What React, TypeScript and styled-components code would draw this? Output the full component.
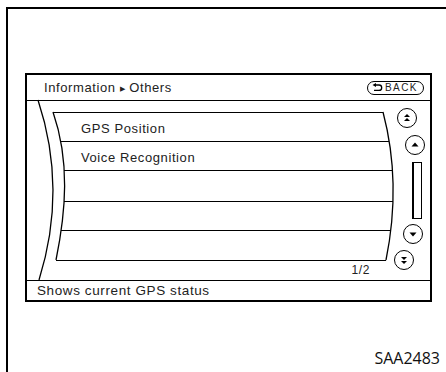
import styled, { createGlobalStyle } from 'styled-components';

const GlobalStyle = createGlobalStyle`
  html, body {
    margin: 0;
    padding: 0;
    background: #fff;
  }
  * {
    box-sizing: border-box;
  }
`;

// curve control points (x only, relative to the list body); y is spread evenly
const LEFT_EDGE = [26, 43, 39, 29];
const RIGHT_EDGE = [356, 369, 369, 359];
const EDGE_TOP = 11;
const EDGE_BOTTOM = 159;

const bez = (p: number[], y: number) => {
  const t = (y - EDGE_TOP) / (EDGE_BOTTOM - EDGE_TOP);
  const u = 1 - t;
  return u * u * u * p[0] + 3 * t * u * u * p[1] + 3 * t * t * u * p[2] + t * t * t * p[3];
};

const TEXT_LEFT = 54;

const rows = [
  { label: 'GPS Position', line: 40 },
  { label: 'Voice Recognition', line: 69 },
  { label: '', line: 100 },
  { label: '', line: 129 },
  { label: '', line: 159 },
];

const Page = styled.div`
  width: 446px;
  height: 372px;
  padding: 7px 0 0 6px;
  overflow: hidden;
`;

const Frame = styled.div`
  height: 365px;
  border-top: 2px solid #000;
  border-left: 2px solid #000;
  display: flex;
  flex-direction: column;
`;

const Screen = styled.div`
  margin: 64px 0 0 17px;
  width: 407px;
  height: 229px;
  border: 2px solid #000;
  display: flex;
  flex-direction: column;
  font-family: 'Liberation Sans', Arial, sans-serif;
  color: #222;
  letter-spacing: 0.6px;
`;

const Header = styled.div`
  height: 26px;
  border-bottom: 1px solid #000;
  display: flex;
  align-items: center;
  justify-content: space-between;
  padding: 0 6px 0 17px;
`;

const Title = styled.div`
  font-size: 13px;
`;

const Sep = styled.span`
  font-size: 7px;
  margin: 0 4px;
  position: relative;
  top: -1px;
`;

const BackButton = styled.div`
  width: 57px;
  height: 14px;
  border: 1.3px solid #000;
  border-radius: 7px;
  display: flex;
  align-items: center;
  padding-left: 4px;
  gap: 2px;
  font-size: 10px;
  letter-spacing: 1.4px;
`;

const Body = styled.div`
  position: relative;
  height: 179px;
  display: flex;
`;

const Curves = styled.svg`
  position: absolute;
  left: 0;
  top: 0;
  overflow: visible;
  pointer-events: none;
`;

const ListColumn = styled.div`
  width: 366px;
  padding-top: 11px;
  display: flex;
  flex-direction: column;
`;

const TopRule = styled.div<{ $left: number; $width: number }>`
  margin-left: ${(p) => p.$left}px;
  width: ${(p) => p.$width}px;
  height: 1px;
  background: #000;
`;

const Row = styled.div<{ $left: number; $width: number; $height: number }>`
  margin-left: ${(p) => p.$left}px;
  width: ${(p) => p.$width}px;
  height: ${(p) => p.$height + 1}px;
  padding: 3px 0 0 ${(p) => TEXT_LEFT - p.$left}px;
  border-bottom: 1px solid #000;
  display: flex;
  align-items: center;
  font-size: 13px;
  white-space: nowrap;
`;

const PageCount = styled.div`
  text-align: right;
  padding: 2px 23px 0 0;
  font-size: 12px;
  line-height: 14px;
`;

const ScrollColumn = styled.div`
  width: 37px;
  display: flex;
  flex-direction: column;
  align-items: flex-start;
`;

const Knob = styled.div<{ $shift: number; $gap: number }>`
  margin: ${(p) => p.$gap}px 0 0 ${(p) => p.$shift}px;
  width: 20px;
  height: 20px;
  border: 1.3px solid #000;
  border-radius: 50%;
  display: flex;
  align-items: center;
  justify-content: center;
`;

const Track = styled.div`
  margin: 7px 0 0 19px;
  width: 10px;
  height: 57px;
  border: 1.5px solid #000;
  border-left-width: 2px;
`;

const StatusBar = styled.div`
  height: 20px;
  border-top: 1px solid #000;
  padding: 1px 0 0 10px;
  font-size: 13.5px;
  line-height: 18px;
`;

const Caption = styled.div`
  margin-top: 46px;
  padding-right: 6px;
  text-align: right;
  font-family: 'Open Sans', sans-serif;
  font-size: 16px;
  line-height: 20px;
  color: #111;
`;

const BackIcon = () => (
  <svg width="11" height="9" viewBox="0 0 11 9">
    <path d="M3.5 2 H7 A2.6 2.6 0 0 1 7 7.4 H2" fill="none" stroke="#000" strokeWidth="1.3" />
    <path d="M0.5 2 L4 0 L4 4 Z" fill="#000" />
  </svg>
);

const Arrow = ({ dir, double }: { dir: 'up' | 'down'; double?: boolean }) => (
  <svg width="10" height="10" viewBox="0 0 10 10">
    <g transform={dir === 'down' ? 'rotate(180 5 5)' : undefined}>
      {double ? (
        <>
          <path d="M5 1 L8 4 L2 4 Z" fill="#000" />
          <path d="M5 5 L8 8 L2 8 Z" fill="#000" />
        </>
      ) : (
        <path d="M5 2.5 L8.5 6.5 L1.5 6.5 Z" fill="#000" />
      )}
    </g>
  </svg>
);

export default function App() {
  let prev = EDGE_TOP;
  const laidOut = rows.map((r) => {
    const left = bez(LEFT_EDGE, r.line);
    const right = bez(RIGHT_EDGE, r.line);
    const height = r.line - prev - 1;
    prev = r.line;
    return { ...r, left, width: right - left, height };
  });

  return (
    <Page>
      <GlobalStyle />
      <Frame>
        <Screen>
          <Header>
            <Title>
              Information<Sep>▶</Sep>Others
            </Title>
            <BackButton>
              <BackIcon />
              BACK
            </BackButton>
          </Header>
          <Body>
            <Curves width="403" height="179">
              <path d="M11 -1 C30.8 59 30.8 119 12 179" fill="none" stroke="#000" strokeWidth="1.3" />
              <path d="M26 11 C43 60.3 39 109.7 29 159" fill="none" stroke="#000" strokeWidth="1.3" />
              <path d="M356 11 C369 60.3 369 109.7 359 159" fill="none" stroke="#000" strokeWidth="1.3" />
            </Curves>
            <ListColumn>
              <TopRule $left={LEFT_EDGE[0]} $width={RIGHT_EDGE[0] - LEFT_EDGE[0]} />
              {laidOut.map((r, i) => (
                <Row key={i} $left={r.left} $width={r.width} $height={r.height}>
                  {r.label}
                </Row>
              ))}
              <PageCount>1/2</PageCount>
            </ListColumn>
            <ScrollColumn>
              <Knob $shift={4} $gap={7}>
                <Arrow dir="up" double />
              </Knob>
              <Knob $shift={12} $gap={7}>
                <Arrow dir="up" />
              </Knob>
              <Track />
              <Knob $shift={10} $gap={5}>
                <Arrow dir="down" />
              </Knob>
              <Knob $shift={1} $gap={6}>
                <Arrow dir="down" double />
              </Knob>
            </ScrollColumn>
          </Body>
          <StatusBar>Shows current GPS status</StatusBar>
        </Screen>
        <Caption>SAA2483</Caption>
      </Frame>
    </Page>
  );
}
